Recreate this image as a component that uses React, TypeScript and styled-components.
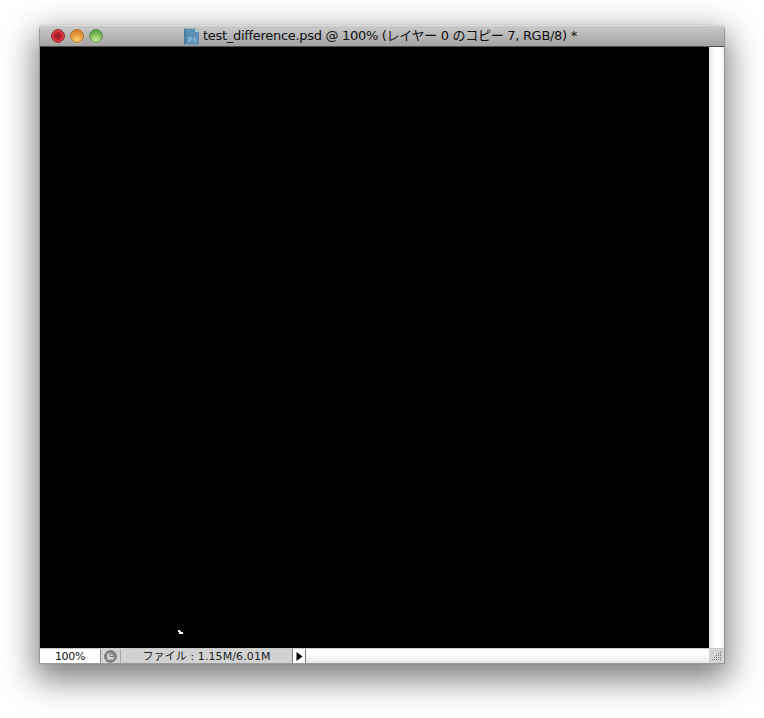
import React from "react";
import styled, { createGlobalStyle } from "styled-components";

const Global = createGlobalStyle`
  html, body { margin: 0; padding: 0; background: #fff; }
  body { width: 764px; height: 718px; overflow: hidden; }
`;

const Page = styled.div`
  width: 764px;
  height: 718px;
  padding: 25px 0 0 39px;
  box-sizing: border-box;
`;

const Window = styled.div`
  width: 686px;
  height: 639px;
  display: flex;
  flex-direction: column;
  border-radius: 5px 5px 0 0;
  background: #fff;
  box-shadow: 0 12px 32px 4px rgba(0, 0, 0, 0.5), 0 0 1px 0 rgba(0, 0, 0, 0.35);
  border: 1px solid #9a9a9a;
  border-top: 0;
  box-sizing: border-box;
`;

const TitleBar = styled.div`
  height: 22px;
  flex: none;
  display: flex;
  align-items: center;
  position: relative;
  box-sizing: border-box;
  border-radius: 5px 5px 0 0;
  border-top: 1px solid #dcdcdc;
  border-bottom: 1px solid #4f4f4f;
  background: linear-gradient(#cacaca, #a3a3a3);
`;

const Lights = styled.div`
  display: flex;
  gap: 5px;
  padding-left: 11px;
`;

const Light = styled.span<{ $c1: string; $c2: string; $c3: string; $dot?: boolean }>`
  width: 14px;
  height: 14px;
  border-radius: 50%;
  box-sizing: border-box;
  border: 1px solid ${(p) => p.$c3};
  background: ${(p) =>
    p.$dot
      ? `radial-gradient(circle at 50% 50%, #8f1c28 0, #9c1f2a 22%, ${p.$c2} 42%, ${p.$c1} 100%)`
      : `radial-gradient(circle at 50% 85%, ${p.$c1} 0%, ${p.$c2} 75%)`};
  box-shadow: 0 1px 0 rgba(255, 255, 255, 0.35);
`;

const Title = styled.div`
  position: absolute;
  left: 143px;
  top: 0;
  height: 20px;
  display: flex;
  align-items: center;
  gap: 3px;
  white-space: nowrap;
  font: 13px/20px "DejaVu Sans", "Noto Sans CJK JP", sans-serif;
  letter-spacing: -0.3px;
  color: #111;
`;

const Body = styled.div`
  flex: 1;
  display: flex;
  min-height: 0;
`;

const Canvas = styled.div`
  flex: 1;
  background: #000;
  position: relative;
`;

const Speck = styled.svg`
  position: absolute;
  left: 138px;
  top: 583px;
`;

const ScrollTrack = styled.div`
  width: 15px;
  flex: none;
  background: linear-gradient(90deg, #e6e6e6, #fff 40%, #fff 70%, #f0f0f0);
`;

const StatusBar = styled.div`
  height: 15px;
  flex: none;
  display: flex;
  font: 11px/15px "DejaVu Sans", "Noto Sans CJK JP", sans-serif;
  color: #222;
  border-top: 1px solid #c8c8c8;
  box-sizing: border-box;
`;

const Zoom = styled.div`
  width: 61px;
  flex: none;
  background: #fff;
  text-align: center;
  color: #111;
  letter-spacing: -0.35px;
  box-sizing: border-box;
  border-right: 1px solid #888;
`;

const Clock = styled.div`
  width: 20px;
  flex: none;
  background: #d2d2d2;
  display: flex;
  align-items: center;
  justify-content: center;
  padding-right: 1px;
  box-sizing: border-box;
  border-right: 1px solid #aaa;
`;

const Info = styled.div`
  width: 171px;
  flex: none;
  background: #d2d2d2;
  text-align: center;
  letter-spacing: 0.1px;
  box-sizing: border-box;
`;

const Arrow = styled.div`
  width: 14px;
  flex: none;
  background: #fff;
  border: 1px solid #777;
  border-width: 0 1px;
  display: flex;
  align-items: center;
  justify-content: center;
  box-sizing: border-box;
`;

const Hscroll = styled.div`
  flex: 1;
  background: linear-gradient(#fff 40%, #e9e9e9);
`;

const Grip = styled.div`
  width: 15px;
  flex: none;
  background: #d4d4d4;
  display: flex;
  align-items: center;
  justify-content: center;
`;

const DocIcon = () => (
  <svg width="17" height="17" viewBox="0 0 17 17">
    <path d="M1 0.5h11l4 3.5v12.5H1z" fill="#5b8fb3" />
    <path d="M12 0.5v3.5h4z" fill="#a9c8dc" />
    <rect x="1" y="1" width="2" height="15" fill="#4a7da0" />
    <path d="M6 14V9.5h1.6a1.2 1.2 0 0 1 0 2.6H6.4M13 10.3c-1-.9-2.6-.6-2.4.5.2 1 2.6.7 2.5 2-.1 1.1-1.900 1.200-2.700.4" fill="none" stroke="#b8d4e6" strokeWidth="0.8" />
  </svg>
);

const ClockIcon = () => (
  <svg width="13" height="13" viewBox="0 0 13 13">
    <circle cx="6.500" cy="6.500" r="5.800" fill="#8a8a8a" stroke="#666" />
    <path d="M3.500 3.500h3.200l2.800 2.800v3.200h-6z" fill="#d8d8d8" />
    <path d="M6 3.500v3h3.500" fill="none" stroke="#666" />
  </svg>
);

const PlayIcon = () => (
  <svg width="7" height="9" viewBox="0 0 7 9">
    <path d="M0.500 0v9L6.500 4.500z" fill="#000" />
  </svg>
);

const GripIcon = () => (
  <svg width="11" height="11" viewBox="0 0 11 11" fill="#777">
    {[
      [9, 0], [9, 2], [7, 2], [9, 4], [7, 4], [5, 4], [9, 6], [7, 6], [5, 6], [3, 6],
      [9, 8], [7, 8], [5, 8], [3, 8], [1, 8],
    ].map(([x, y]) => (
      <rect key={`${x}-${y}`} x={x} y={y} width="1" height="1" />
    ))}
  </svg>
);

export default function App() {
  return (
    <>
      <Global />
      <Page>
        <Window>
          <TitleBar>
            <Lights>
              <Light $dot $c1="#f0707a" $c2="#c4232b" $c3="#8c2a30" />
              <Light $c1="#ffd070" $c2="#e0852a" $c3="#a8763a" />
              <Light $c1="#c4ec90" $c2="#5fa53f" $c3="#5f8f4a" />
            </Lights>
            <Title>
              <DocIcon />
              <span>test_difference.psd @ 100% (レイヤー 0 のコピー 7, RGB/8) *</span>
            </Title>
          </TitleBar>
          <Body>
            <Canvas>
              <Speck width="5" height="4" viewBox="0 0 5 4">
                <path d="M0 0h2v1h1v1h2v2H1V2H0z" fill="#fff" />
              </Speck>
            </Canvas>
            <ScrollTrack />
          </Body>
          <StatusBar>
            <Zoom>100%</Zoom>
            <Clock>
              <ClockIcon />
            </Clock>
            <Info>ファイル : 1.15M/6.01M</Info>
            <Arrow>
              <PlayIcon />
            </Arrow>
            <Hscroll />
            <Grip>
              <GripIcon />
            </Grip>
          </StatusBar>
        </Window>
      </Page>
    </>
  );
}
